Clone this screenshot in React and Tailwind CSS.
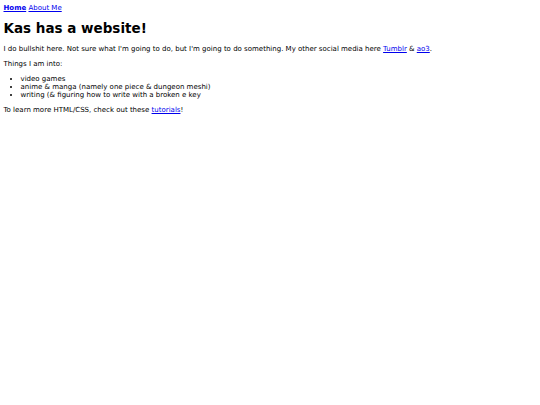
export default function App() {
  return (
    <div className="min-h-screen bg-white p-[3.5px] text-[7px] leading-[8px] text-black" style={{ fontFamily: '"DejaVu Sans", Verdana, sans-serif' }}>
      <nav>
        <a href="#" className="font-bold text-[#0000ee] underline">Home</a>{" "}
        <a href="#" className="text-[#0000ee] underline">About Me</a>
      </nav>
      <h1 className="my-[9px] text-[13.5px] leading-[15.7px] font-bold">Kas has a website!</h1>
      <p className="my-[7px]">
        I do bullshit here. Not sure what I'm going to do, but I'm going to do something. My other social media here{" "}
        <a href="#" className="text-[#0000ee] underline">Tumblr</a> &amp;{" "}
        <a href="#" className="text-[#0000ee] underline">ao3</a>.
      </p>
      <p className="my-[7px]">Things I am into:</p>
      <ul className="my-[7px] list-disc pl-[17px]">
        <li>video games</li>
        <li>anime &amp; manga (namely one piece &amp; dungeon meshi)</li>
        <li>writing (&amp; figuring how to write with a broken e key</li>
      </ul>
      <p className="my-[7px]">
        To learn more HTML/CSS, check out these{" "}
        <a href="#" className="text-[#0000ee] underline">tutorials</a>!
      </p>
    </div>
  );
}
